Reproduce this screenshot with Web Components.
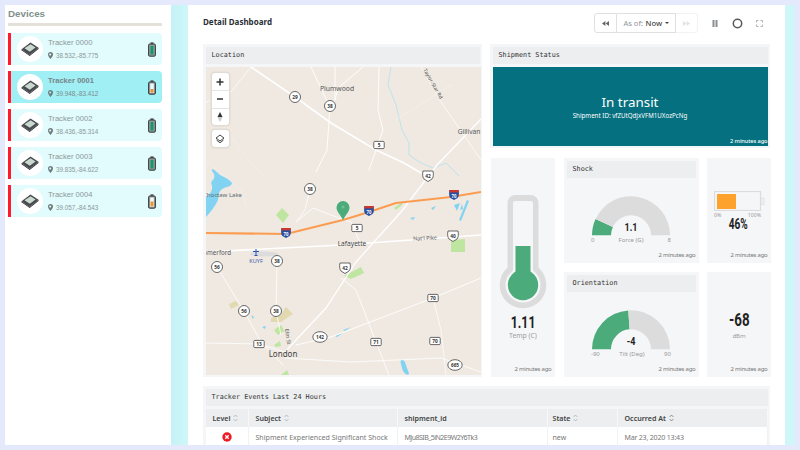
<!DOCTYPE html>
<html><head><meta charset="utf-8"><style>
html,body{margin:0;padding:0}
body{width:800px;height:450px;overflow:hidden;background:#e4e9fb;font-family:"Noto Sans",sans-serif}
</style></head><body>
<app-shell>
  <device-list slot="side" title="Devices">
    <device-card name="Tracker 0000" coord="38.532,-85.775" level="full"></device-card>
    <device-card name="Tracker 0001" coord="39.948,-83.412" level="low" active></device-card>
    <device-card name="Tracker 0002" coord="38.436,-85.314" level="full"></device-card>
    <device-card name="Tracker 0003" coord="39.835,-84.622" level="full"></device-card>
    <device-card name="Tracker 0004" coord="39.057,-84.543" level="mid"></device-card>
  </device-list>
  <dash-toolbar slot="bar"></dash-toolbar>
  <dash-card slot="map" heading="Location" style="height:333px"><map-view></map-view></dash-card>
  <dash-card slot="status" heading="Shipment Status" style="height:104px"><status-panel></status-panel></dash-card>
  <stats-grid slot="stats">
    <stat-card style="grid-row:1/3"><thermo-meter></thermo-meter></stat-card>
    <dash-card heading="Shock" inset><gauge-dial value="1.1" label="Force (G)" min="0" max="8"></gauge-dial><ago-note></ago-note></dash-card>
    <stat-card><battery-meter></battery-meter></stat-card>
    <dash-card heading="Orientation" inset><gauge-dial value="-4" label="Tilt (Deg)" min="-90" max="90"></gauge-dial><ago-note></ago-note></dash-card>
    <stat-card><signal-read></signal-read></stat-card>
  </stats-grid>
  <dash-card slot="table" heading="Tracker Events Last 24 Hours"><events-table></events-table></dash-card>
</app-shell>
<script>
class Base extends HTMLElement{
  constructor(){super();this.attachShadow({mode:'open'})}
  connectedCallback(){this.shadowRoot.innerHTML=this.render()}
  a(n){return this.getAttribute(n)}
}
const def=(n,r)=>customElements.define(n,class extends Base{render(){return r.call(this)}});
const NARROW='"Roboto",sans-serif';

def('app-shell',()=>`<style>
:host{display:flex;width:800px;height:450px;padding:5px 5px 5px 5px;box-sizing:border-box}
.side{width:166px;background:#fff;flex:none;height:440px;overflow:hidden}
.gut{width:17px;flex:none;background:linear-gradient(90deg,#c4f2f5,#cff7f9)}
.main{width:597px;flex:none;background:#fff;padding:8px 15px 0;box-sizing:border-box;height:440px;overflow:hidden}
.gut2{width:10px;flex:none;background:#cff7f9}
.cols{display:grid;grid-template-columns:279px 280px;gap:8px;margin-top:11px}
.right{display:flex;flex-direction:column;gap:10px}
.table{margin-top:9px}
</style>
<div class="side"><slot name="side"></slot></div><div class="gut"></div>
<div class="main"><slot name="bar"></slot>
<div class="cols"><slot name="map"></slot><div class="right"><slot name="status"></slot><slot name="stats"></slot></div></div>
<div class="table"><slot name="table"></slot></div></div><div class="gut2"></div>`);

def('device-list',function(){return `<style>
:host{display:block;padding:0 3px}
h2{margin:0;height:18px;font:700 9.8px/17px "Liberation Sans",sans-serif;color:#7f8f8b}
hr{border:0;height:3px;background:#e3e1d9;margin:0 0 7px;width:154px}
.l{display:flex;flex-direction:column;gap:6px;width:154px}
</style><h2>${this.a('title')}</h2><hr><div class="l"><slot></slot></div>`});

def('device-card',function(){
 const act=this.hasAttribute('active');
 const lv=this.a('level');
 const fill=lv==='full'?'<rect x="2.2" y="3.5" width="3.6" height="9.5" fill="#8f9a9a"/><rect x="2.6" y="4" width="2.8" height="8.5" fill="#129a66"/>':lv==='low'?'<rect x="2.2" y="3.5" width="3.6" height="9.5" fill="#e8fbff"/><rect x="2.6" y="9" width="2.8" height="3.6" fill="#f08a24"/>':'<rect x="2.2" y="3.5" width="3.6" height="9.5" fill="#f4fbfb"/><rect x="2.6" y="7.5" width="2.8" height="5" fill="#ee9530"/>';
 return `<style>
:host{display:flex;align-items:center;height:32px;box-sizing:border-box;border-left:3px solid #ff1a2e;background:${act?'#a0eff4':'#e2fbfc'};border-radius:0 4px 4px 0;font-family:"Liberation Sans",sans-serif;color:#8b9899}
.av{width:26px;height:26px;border-radius:50%;background:#fff;display:flex;align-items:center;justify-content:center;margin-left:6px;flex:none}
.tx{margin-left:5px;flex:1;min-width:0}
.n{font-size:7.6px;line-height:10px;${act?'font-weight:700;color:#77868a':''}}
.c{font-size:6.3px;line-height:9px;margin-top:3px;display:flex;align-items:center;gap:3px;color:${act?'#7d8b8e':'#8b9899'}}
.b{margin-right:6px;flex:none;display:block}
</style>
<div class="av"><svg width="18" height="14" viewBox="0 0 18 14"><path d="M.5 7.2 9.5.6l8 5.2-8.8 7.2z" fill="#474a4e"/><path d="M3.5 6.2 9.6 2.2l5 3.3-5.8 4.2z" fill="#cbd8d0"/><path d="M.5 7.2 8.700 13 17.500 5.800v1.200L8.700 14 .5 8.200z" fill="#2f3134"/></svg></div>
<div class="tx"><div class="n">${this.a('name')}</div><div class="c"><svg width="5" height="7" viewBox="0 0 5 7"><path d="M2.5 0A2.5 2.5 0 0 0 0 2.5C0 4.200 2.5 7 2.5 7S5 4.200 5 2.500A2.500 2.500 0 0 0 2.500 0zm0 3.400a1 1 0 1 1 0-1.900 1 1 0 0 1 0 1.900z" fill="#6f7d7e"/></svg>${this.a('coord')}</div></div>
<svg class="b" width="8" height="15" viewBox="0 0 8 15"><rect x="2.500" y=".3" width="3" height="2" fill="#555"/><rect x=".6" y="2" width="6.800" height="12.200" rx="1.200" fill="#8f9a9a" stroke="#34393c" stroke-width="1"/>${fill}</svg>`});

def('dash-toolbar',()=>`<style>
:host{display:flex;align-items:center;justify-content:space-between;height:20px;font-family:"Noto Sans",sans-serif}
h1{margin:0;font:700 8px/20px "Noto Sans",sans-serif;color:#2a2f36;position:relative;top:-1px}
.r{display:flex;align-items:center}
.g{display:flex;height:20px;width:104px;box-sizing:border-box}
.g>div{display:flex;align-items:center;justify-content:center;box-sizing:border-box;background:#fff;border:1px solid #e0e0e0}
.a{width:23px;border-radius:3px 0 0 3px}
.m{width:59px;border-left:0!important;font-size:7.6px;color:#8f9397;white-space:nowrap}
.m b{font-weight:500;color:#444;margin-left:2.5px}
.m i{display:inline-block;border:2.2px solid transparent;border-top:2.5px solid #444;border-bottom:0;margin-left:2.5px}
.z{width:22px;border-left:0!important;border-color:#f2f2f2!important;border-radius:0 3px 3px 0}
.ic{display:flex;margin-left:6px;align-items:center}
.ic span{width:22px;display:flex;justify-content:center}
</style>
<h1>Detail Dashboard</h1>
<div class="r"><div class="g"><div class="a"><svg width="7" height="5" viewBox="0 0 7 5"><path d="M3.400 0v5L0 2.500zM7 0v5L3.600 2.500z" fill="#666"/></svg></div><div class="m">As of:<b>Now</b><i></i></div><div class="z"><svg width="7" height="5" viewBox="0 0 7 5"><path d="M0 0v5l3.400-2.500zM3.600 0v5L7 2.500z" fill="#e2e2e2"/></svg></div></div>
<div class="ic"><span><svg width="6" height="7" viewBox="0 0 6 7"><path d="M.5 0h2v7h-2zM3.500 0h2v7h-2z" fill="#8a8d91"/></svg></span>
<span><svg width="11" height="11" viewBox="0 0 11 11"><circle cx="5.500" cy="5.500" r="4.200" fill="none" stroke="#55585c" stroke-width="1.500"/></svg></span>
<span><svg width="7" height="7" viewBox="0 0 7 7"><path d="M.5 2.500v-2h2M4.500.5h2v2M6.500 4.500v2h-2M2.500 6.500h-2v-2" fill="none" stroke="#a8abae" stroke-width=".9"/></svg></span></div></div>`);

def('dash-card',function(){const ins=this.hasAttribute('inset');return `<style>
:host{display:flex;flex-direction:column;box-sizing:border-box;background:#f5f6f8;padding:3px ${ins?3:2.5}px 2px;position:relative;min-width:0}
.h{height:17px;flex:none;background:#eceef0;font:6.8px/17px "DejaVu Sans Mono",monospace;color:#333;padding-left:6px;margin-bottom:3px}
.b{flex:1;min-height:0;display:flex;flex-direction:column}
</style><div class="h">${this.a('heading')}</div><div class="b"><slot></slot></div>`});

def('stat-card',()=>`<style>:host{display:flex;flex-direction:column;background:#f5f6f8;min-width:0;position:relative}
.b{flex:1;min-height:0;display:flex;flex-direction:column}
.f{height:8px;line-height:8px;font-size:6px;letter-spacing:-.25px;color:#777;text-align:right;padding:0 3.5px 4px 0}
</style><div class="b"><slot></slot></div><div class="f">2 minutes ago</div>`);

def('ago-note',()=>`<style>:host{display:block;height:8px;font:6px/8px "Noto Sans",sans-serif;letter-spacing:-.25px;color:#777;text-align:right;padding:0 0 2px 0}</style>2 minutes ago`);

def('stats-grid',()=>`<style>:host{display:grid;grid-template-columns:64px 135px 64px;grid-template-rows:105px 105px;column-gap:8.5px;row-gap:9px;margin:0 -1px 0 1px}
::slotted(*){min-width:0}</style><slot></slot>`);

def('status-panel',()=>`<style>:host{flex:1;display:flex;flex-direction:column;align-items:center;background:#05707f;color:#fff;position:relative;height:79px;box-sizing:border-box;padding-top:26px;font-family:"Noto Sans",sans-serif}
.t{font-size:13.400px;line-height:18px}.s{font-size:6.200px;line-height:9px}
.f{margin-top:auto;align-self:flex-end;font-size:5.700px;letter-spacing:-.1px;line-height:8px;padding-bottom:1px;font-weight:500}
</style><div class="t">In transit</div><div class="s">Shipment ID: vfZUtQdjxVFM1UXozPcNg</div><div class="f">2 minutes ago</div>`);

def('thermo-meter',()=>`<style>:host{display:flex;flex-direction:column;align-items:center;padding-top:37px;font-family:"Noto Sans",sans-serif}
svg{display:block}
.v{font:700 17px/18px ${NARROW};color:#222;margin-top:4px;transform:scaleX(.72)}
.u{font-size:6.800px;line-height:10px;color:#9a9da0}
</style><svg width="48" height="114" viewBox="0 0 48 114"><rect x="8.500" y="0" width="31" height="95" rx="8" fill="#dcdcdc"/><circle cx="24" cy="90" r="23.300" fill="#dcdcdc"/><rect x="14" y="6" width="20" height="84" rx="2" fill="#f5f6f8"/><circle cx="24" cy="90" r="17.500" fill="#f5f6f8"/><rect x="16.500" y="51" width="15" height="40" fill="#4bab7a"/><circle cx="24" cy="90" r="15.200" fill="#4bab7a"/></svg>
<div class="v">1.11</div><div class="u">Temp (C)</div>`);

def('gauge-dial',function(){
 const v=+this.a('value'),mn=+this.a('min'),mx=+this.a('max');
 const f=(v-mn)/(mx-mn),an=Math.PI*f,R=39,r=20,cx=40,cy=39.3;
 const p=(rad,t)=>`${(cx-rad*Math.cos(t)).toFixed(2)} ${(cy-rad*Math.sin(t)).toFixed(2)}`;
 const seg=(a,b,c)=>`<path d="M${p(R,a)}A${R} ${R} 0 0 1 ${p(R,b)}L${p(r,b)}A${r} ${r} 0 0 0 ${p(r,a)}Z" fill="${c}"/>`;
 return `<style>:host{display:flex;flex-direction:column;align-items:center;flex:1;min-height:0;font-family:"Noto Sans",sans-serif;padding-top:15px}
.w{position:relative;width:80px;height:40px}svg{display:block}
.v{position:absolute;left:0;right:0;top:25px;text-align:center;font:700 11.500px/13px ${NARROW};color:#222;transform:scaleX(.78)}
.l{display:flex;justify-content:space-between;width:80px;font-size:6px;line-height:8px;color:#999}
</style><div class="w"><svg width="80" height="40" viewBox="0 0 80 40">${seg(0,an,'#4bab7a')}${seg(an,Math.PI,'#dcdcdc')}</svg><div class="v">${this.a('value')}</div></div>
<div class="l"><span>${this.a('min')}</span><span>${this.a('label')}</span><span>${this.a('max')}</span></div>`});

def('battery-meter',()=>`<style>:host{display:flex;flex-direction:column;align-items:center;padding-top:33px;font-family:"Noto Sans",sans-serif}
svg{display:block}
.l{display:flex;justify-content:space-between;width:47px;font-size:5.200px;line-height:7px;color:#999;margin:1px 3px 0 0}
.v{font:700 14px/14px ${NARROW};color:#222;margin-top:-2px;margin-right:1px;transform:scaleX(.72);transform-origin:center}
</style><svg width="51" height="20" viewBox="0 0 51 20"><rect x=".5" y=".5" width="46" height="19" fill="none" stroke="#dcdcdc" stroke-width="1.200"/><rect x="3" y="3" width="19" height="15" fill="#fda32d"/><rect x="47" y="7" width="3" height="6.500" fill="#f0f0f0" stroke="#dcdcdc" stroke-width=".7"/></svg>
<div class="l"><span>0%</span><span>100%</span></div><div class="v">46%</div>`);

def('signal-read',()=>`<style>:host{display:flex;flex-direction:column;align-items:center;padding-top:38px;font-family:"Noto Sans",sans-serif}
.v{font:700 18.500px/20px ${NARROW};color:#222;transform:scaleX(.72)}.u{font-size:6px;line-height:8px;color:#999;margin-top:2px}
</style><div class="v">-68</div><div class="u">dBm</div>`);

const sort=(d)=>`<svg width="5" height="8" viewBox="0 0 5 8" style="margin-left:3px"><path d="M.6 3 2.500 1l1.900 2M.6 5l1.900 2 1.900-2" fill="none" stroke="${d?'#555':'#9a9ea2'}" stroke-width=".6"/></svg>`;
def('events-table',()=>`<style>:host{display:block;font-family:"Noto Sans",sans-serif;height:40px}
.row{display:grid;grid-template-columns:43px 149px 150px 70px 1fr}
.row>div{display:flex;align-items:center;box-sizing:border-box;white-space:nowrap}
.hd>div{height:18px;background:#eceef0;font-size:7.100px;font-weight:600;color:#444;border-right:1px solid #f8f8f9}
.hd>div:nth-child(1){padding-left:7px}.hd>div:nth-child(2){padding-left:7px}.hd>div:nth-child(3){padding-left:7px}.hd>div:nth-child(4){padding-left:5px}.hd>div:nth-child(5){padding-left:7px}
.bd>div{height:20px;background:#fff;font-size:7.050px;color:#777;border-right:1px solid #f1f2f3}
.bd>div:nth-child(1){justify-content:center}.bd>div:nth-child(2){padding-left:7px}.bd>div:nth-child(3){padding-left:7px;letter-spacing:-.55px}.bd>div:nth-child(4){padding-left:5px}.bd>div:nth-child(5){padding-left:7px;letter-spacing:-.2px}
</style><div class="row hd"><div>Level${sort()}</div><div>Subject${sort()}</div><div>shipment_id</div><div>State${sort()}</div><div>Occurred At${sort(1)}</div></div>
<div class="row bd"><div><svg width="10" height="10" viewBox="0 0 10 10"><circle cx="5" cy="5" r="4.700" fill="#ee1c25"/><path d="M3.300 3.300 6.700 6.700M6.700 3.300 3.300 6.700" stroke="#fff" stroke-width="1.300"/></svg></div><div>Shipment Experienced Significant Shock</div><div>MJu8SIB_5iN2E9W2Y6Tk3</div><div>new</div><div>Mar 23, 2020 13:43</div></div>`);

def('map-view',function(){
 const road=(pts,w=1,c='#fff')=>`<polyline points="${pts}" fill="none" stroke="${c}" stroke-width="${w}" stroke-linejoin="round" stroke-linecap="round"/>`;
 const txt=(x,y,s,o={})=>`<text x="${x}" y="${y}" font-size="${o.fs||6.4}" fill="${o.c||'#555'}" text-anchor="${o.a||'middle'}" ${o.r?`transform="rotate(${o.r} ${x} ${y})"`:''} font-family="Noto Sans,sans-serif">${s}</text>`;
 const lbl=(x,y,s,fs=4.8)=>`<text x="${x}" y="${y+1.7}" font-size="${fs}" font-weight="700" text-anchor="middle" fill="#333" font-family="Noto Sans,sans-serif">${s}</text>`;
 const circ=(x,y,s)=>`<circle cx="${x}" cy="${y}" r="5.500" fill="#fff" stroke="#444" stroke-width=".8"/>`+lbl(x,y,s);
 const oval=(x,y,s)=>`<ellipse cx="${x}" cy="${y}" rx="7.200" ry="5.300" fill="#fff" stroke="#444" stroke-width=".8"/>`+lbl(x,y,s,4.6);
 const rct=(x,y,s)=>`<rect x="${x-5.2}" y="${y-3.6}" width="10.400" height="7.200" rx="1" fill="#fff" stroke="#444" stroke-width=".8"/>`+lbl(x,y,s);
 const us=(x,y,s)=>`<path d="M${x-5} ${y-5}h10c.6 3 .6 6-1 8l-4 2.500-4-2.500c-1.600-2-1.600-5-1-8z" fill="#fff" stroke="#444" stroke-width=".8"/>`+lbl(x,y,s);
 const ih=(x,y)=>`<path d="M${x-4.6} ${y-5}h9.200c.5 3 .6 6.500-1 8l-3.600 2-3.600-2c-1.600-1.500-1.500-5-1-8z" fill="#2a4fa0"/><rect x="${x-4.6}" y="${y-5}" width="9.200" height="2.400" fill="#c8372d"/><text x="${x}" y="${y+2.6}" font-size="4.300" font-weight="700" text-anchor="middle" fill="#fff" font-family="Noto Sans,sans-serif">70</text>`;
 return `<style>:host{display:block;position:relative;width:275px;height:308px;background:#efe9e2;overflow:hidden}
svg{display:block}
.ctl{position:absolute;left:6px;background:#fff;border-radius:3px;box-shadow:0 0 0 1.500px #e0dcd4;display:flex;flex-direction:column;width:17px}
.ctl div{height:17.300px;display:flex;align-items:center;justify-content:center;box-sizing:border-box}
.ctl div+div{border-top:1px solid #e4e4e4}
</style>
<svg width="275" height="308" viewBox="205 67 275 308">
<g>
<path d="M211 169c4 1 6 5 10 7s9 4 10 7c0 3-5 4-8 5s-4 3-5 5c-1 4 0 6-2 9-2 4-7 11-11 15v-20c3-2 5-4 6-8 1-3-2-6 0-8s3-4 2-7c-1-2-3-4-2-5z" fill="#82d3f2"/>
<path d="M400 360c2-1 4 1 5 5s3 7 3 9c-3 2-6-2-7-6s-2-6-1-8z" fill="#82d3f2"/>
<path d="M261 327l4-1-1 3zM430 208l5-2-3 4zM409 218l5-1-2 3zM250 315l3 2-1 2zM334 336l8-3-6 4zM342 330l8-3-6 4z" fill="#82d3f2"/>
<path d="M453 205l6-2-3 8zM459 210l2-6 1 5zM466 200l-8 20 2 1 8-20z" fill="#82d3f2"/>
<path d="M281 208l7 7-6 8-7-8z" fill="#bfe6a0"/>
<path d="M450 240l14-1 0 13-14 0z" fill="#bfe6a0"/>
<path d="M343 276l17-9 3 6-13 6z" fill="#bfe6a0"/>
<path d="M393 208l8-6 0 3-6 5z" fill="#bfe6a0"/>
<path d="M270 318l10-4 5-7 7 7-12 8-10 0z" fill="#e3d9b0"/>
<path d="M228 304l7-3 3 4-8 4z" fill="#e3d9b0"/>
<path d="M273 330l7-5 3 6-6 4z" fill="#bfe6a0"/>
<path d="M273 345l6-4 1 5-5 1z" fill="#bfe6a0"/>
<path d="M280 375l6-5 2 5z" fill="#bfe6a0"/>
<ellipse cx="263" cy="254" rx="14" ry="2.600" fill="#dcdcdc"/>
</g>
<g fill="none" stroke="#a9dff0" stroke-width=".7">
<polyline points="390,67 387,85 395,105 401,130 408,143 408,155 420,163 432,168 445,163 458,176"/>
</g>
<g>
${road('250,67 294,97 330,123 375,150 403,163 420,173',1.600)}
${road('310,67 324,97 329,106',.9)}${road('334,67 334,100',.9)}${road('362,67 337,88 334,100',.9)}
${road('329,106 326,150 315,172',.9)}
${road('378,67 377,110 382,130 375,150 368,170',.9)}
${road('420,67 440,102 480,160',.7)}
${road('480,119 436,165 400,212 355,262 340,285 325,308 295,340 284,352',1.300)}
${road('309,189 304,210 295,222 312,208 338,218 350,222 360,245',.8)}
${road('250,67 230,92 205,102',.7)}
${road('205,160 240,190 245,205',.5,'#f6f2ec')}
${road('205,102 240,150 265,180',.5,'#f6f2ec')}
${road('395,120 450,85',.6,'#f6f2ec')}
${road('216,267 243,311 260,342 282,365',.8)}
${road('276,261 275,311 280,335',.8)}
${road('205,343 258,344 284,352',.8)}
${road('480,278 432,298 330,337 295,345',.9)}
${road('340,278 355,290 375,342 388,375',.8)}
${road('432,298 440,330 445,375',.7)}
${road('284,358 350,362 440,358 480,372',.8)}
${road('205,252 340,245 480,235',1.700)}
${road('205,233 285,234 342,220 368,212 395,203 450,197 480,192',2,'#fb9c50')}
</g>
${txt(241,197,'Choctaw Lake',{fs:6,a:'end',c:'#5a6a70'})}
${txt(230,255,'Somerford',{fs:6.200,a:'end'})}
${txt(255,263,'KUYF',{fs:5.600,c:'#3c5aa8'})}
<path d="M255 249v7M252 251.500h6M253.500 255.500h3" stroke="#2f55b0" stroke-width="1" fill="none"/>
${txt(351,246,'Lafayette',{fs:6.600,c:'#444'})}
${txt(424,240,"Nat'l Pike",{fs:5.400,r:-3})}
${txt(282,357,'London',{fs:8,c:'#444'})}
${txt(285,337,'Elm St',{fs:5.400,r:80})}
${txt(336,91,'Plumwood',{fs:6.800,c:'#555'})}
${txt(468,134,'Gillivan',{fs:6.600})}
${txt(422,70,'Taylor-Star Rd',{fs:5.200,a:'start',r:60})}
${circ(294,97,29)}${circ(329,106,38)}${rct(378,145,5)}
${circ(309,189,38)}${circ(276,261,38)}${circ(275,311,38)}${circ(216,267,56)}${circ(243,311,56)}
${us(427,176,42)}${rct(356,228,5)}${us(344,268,42)}${us(452,236,40)}${rct(432,298,70)}${rct(434,341,70)}${rct(375,342,71)}${rct(258,344,13)}${oval(319,337,142)}${oval(454,365,665)}
${ih(285,233)}${ih(368,211)}${ih(453,195)}
<path d="M342 220c-3-6-6.500-8.500-6.500-12.500a6.500 6.500 0 0 1 13 0c0 4-3.500 6.500-6.500 12.500z" fill="#4bab7a"/><circle cx="342" cy="207" r="1.500" fill="#6fc095"/>
</svg>
<div class="ctl" style="top:6px"><div><svg width="8" height="8" viewBox="0 0 8 8"><path d="M4 .5v7M.5 4h7" stroke="#333" stroke-width="1.500"/></svg></div><div><svg width="8" height="8" viewBox="0 0 8 8"><path d="M1 4h6" stroke="#333" stroke-width="1.500"/></svg></div><div><svg width="6" height="10" viewBox="0 0 6 10"><path d="M3 0 5.500 5h-5z" fill="#333"/><path d="M3 10 5.500 5h-5z" fill="#ccc"/></svg></div></div>
<div class="ctl" style="top:63px"><div style="height:17px"><svg width="10" height="10" viewBox="0 0 10 10"><path d="M5 1 9 4 5 7 1 4z" fill="none" stroke="#333" stroke-width=".9"/><path d="M1.500 6 5 8.800 8.500 6" fill="none" stroke="#333" stroke-width=".9"/></svg></div></div>`});
</script>
</body></html>
